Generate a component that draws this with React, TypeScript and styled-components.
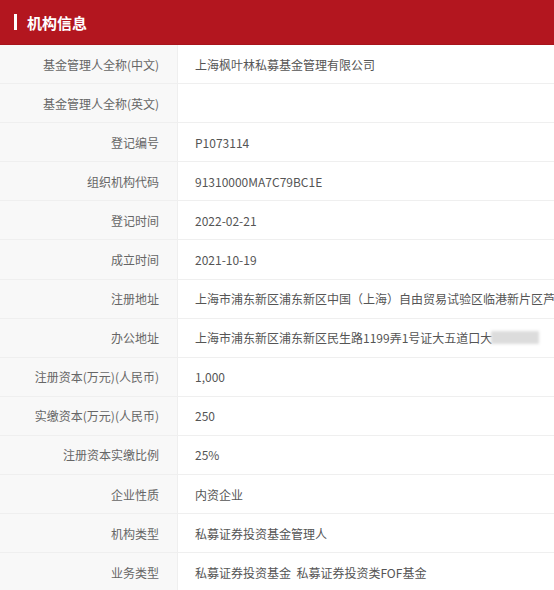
import styled, { createGlobalStyle } from "styled-components";

const GlobalStyle = createGlobalStyle`
  html, body {
    margin: 0;
    padding: 0;
    background: #fff;
    overflow: hidden;
  }
  body {
    font-family: "Noto Sans CJK SC", "Noto Sans", sans-serif;
  }
`;

const Panel = styled.section`
  width: 640px;
`;

const Header = styled.div`
  height: 44px;
  background: #b3161f;
  border-bottom: 1px solid #a8141c;
  display: flex;
  align-items: center;
  padding-left: 14px;
  gap: 10px;
`;

const HeaderMark = styled.span`
  width: 3px;
  height: 16px;
  background: #fff;
`;

const Title = styled.h2`
  margin: 0;
  color: #fff;
  font-size: 15px;
  font-weight: 700;
  line-height: 1;
`;

const Row = styled.div`
  display: grid;
  grid-template-columns: 178px 1fr;
  height: 39.1px;
  border-bottom: 1px solid #efefef;
  box-sizing: border-box;
`;

const Label = styled.div`
  background: #f8f8f8;
  border-right: 1px solid #efefef;
  color: #666;
  font-size: 12px;
  display: flex;
  align-items: center;
  justify-content: flex-end;
  padding-right: 18px;
  white-space: nowrap;
`;

const Value = styled.div`
  color: #555;
  font-size: 12px;
  display: flex;
  align-items: center;
  padding-left: 17px;
  white-space: nowrap;
  overflow: hidden;
`;

const Masked = styled.span`
  display: inline-block;
  width: 48px;
  height: 13px;
  margin-left: -1px;
  background: #dcdcdc;
  filter: blur(1.5px);
`;

type Item = { label: string; value: string; masked?: boolean };

const items: Item[] = [
  { label: "基金管理人全称(中文)", value: "上海枫叶林私募基金管理有限公司" },
  { label: "基金管理人全称(英文)", value: "" },
  { label: "登记编号", value: "P1073114" },
  { label: "组织机构代码", value: "91310000MA7C79BC1E" },
  { label: "登记时间", value: "2022-02-21" },
  { label: "成立时间", value: "2021-10-19" },
  {
    label: "注册地址",
    value: "上海市浦东新区浦东新区中国（上海）自由贸易试验区临港新片区芦硕路",
  },
  {
    label: "办公地址",
    value: "上海市浦东新区浦东新区民生路1199弄1号证大五道口大",
    masked: true,
  },
  { label: "注册资本(万元)(人民币)", value: "1,000" },
  { label: "实缴资本(万元)(人民币)", value: "250" },
  { label: "注册资本实缴比例", value: "25%" },
  { label: "企业性质", value: "内资企业" },
  { label: "机构类型", value: "私募证券投资基金管理人" },
  { label: "业务类型", value: "私募证券投资基金  私募证券投资类FOF基金" },
];

export default function App() {
  return (
    <>
      <GlobalStyle />
      <Panel>
        <Header>
          <HeaderMark />
          <Title>机构信息</Title>
        </Header>
        {items.map((item) => (
          <Row key={item.label}>
            <Label>{item.label}</Label>
            <Value>
              <span style={{ whiteSpace: "pre" }}>{item.value}</span>
              {item.masked && <Masked />}
            </Value>
          </Row>
        ))}
      </Panel>
    </>
  );
}
